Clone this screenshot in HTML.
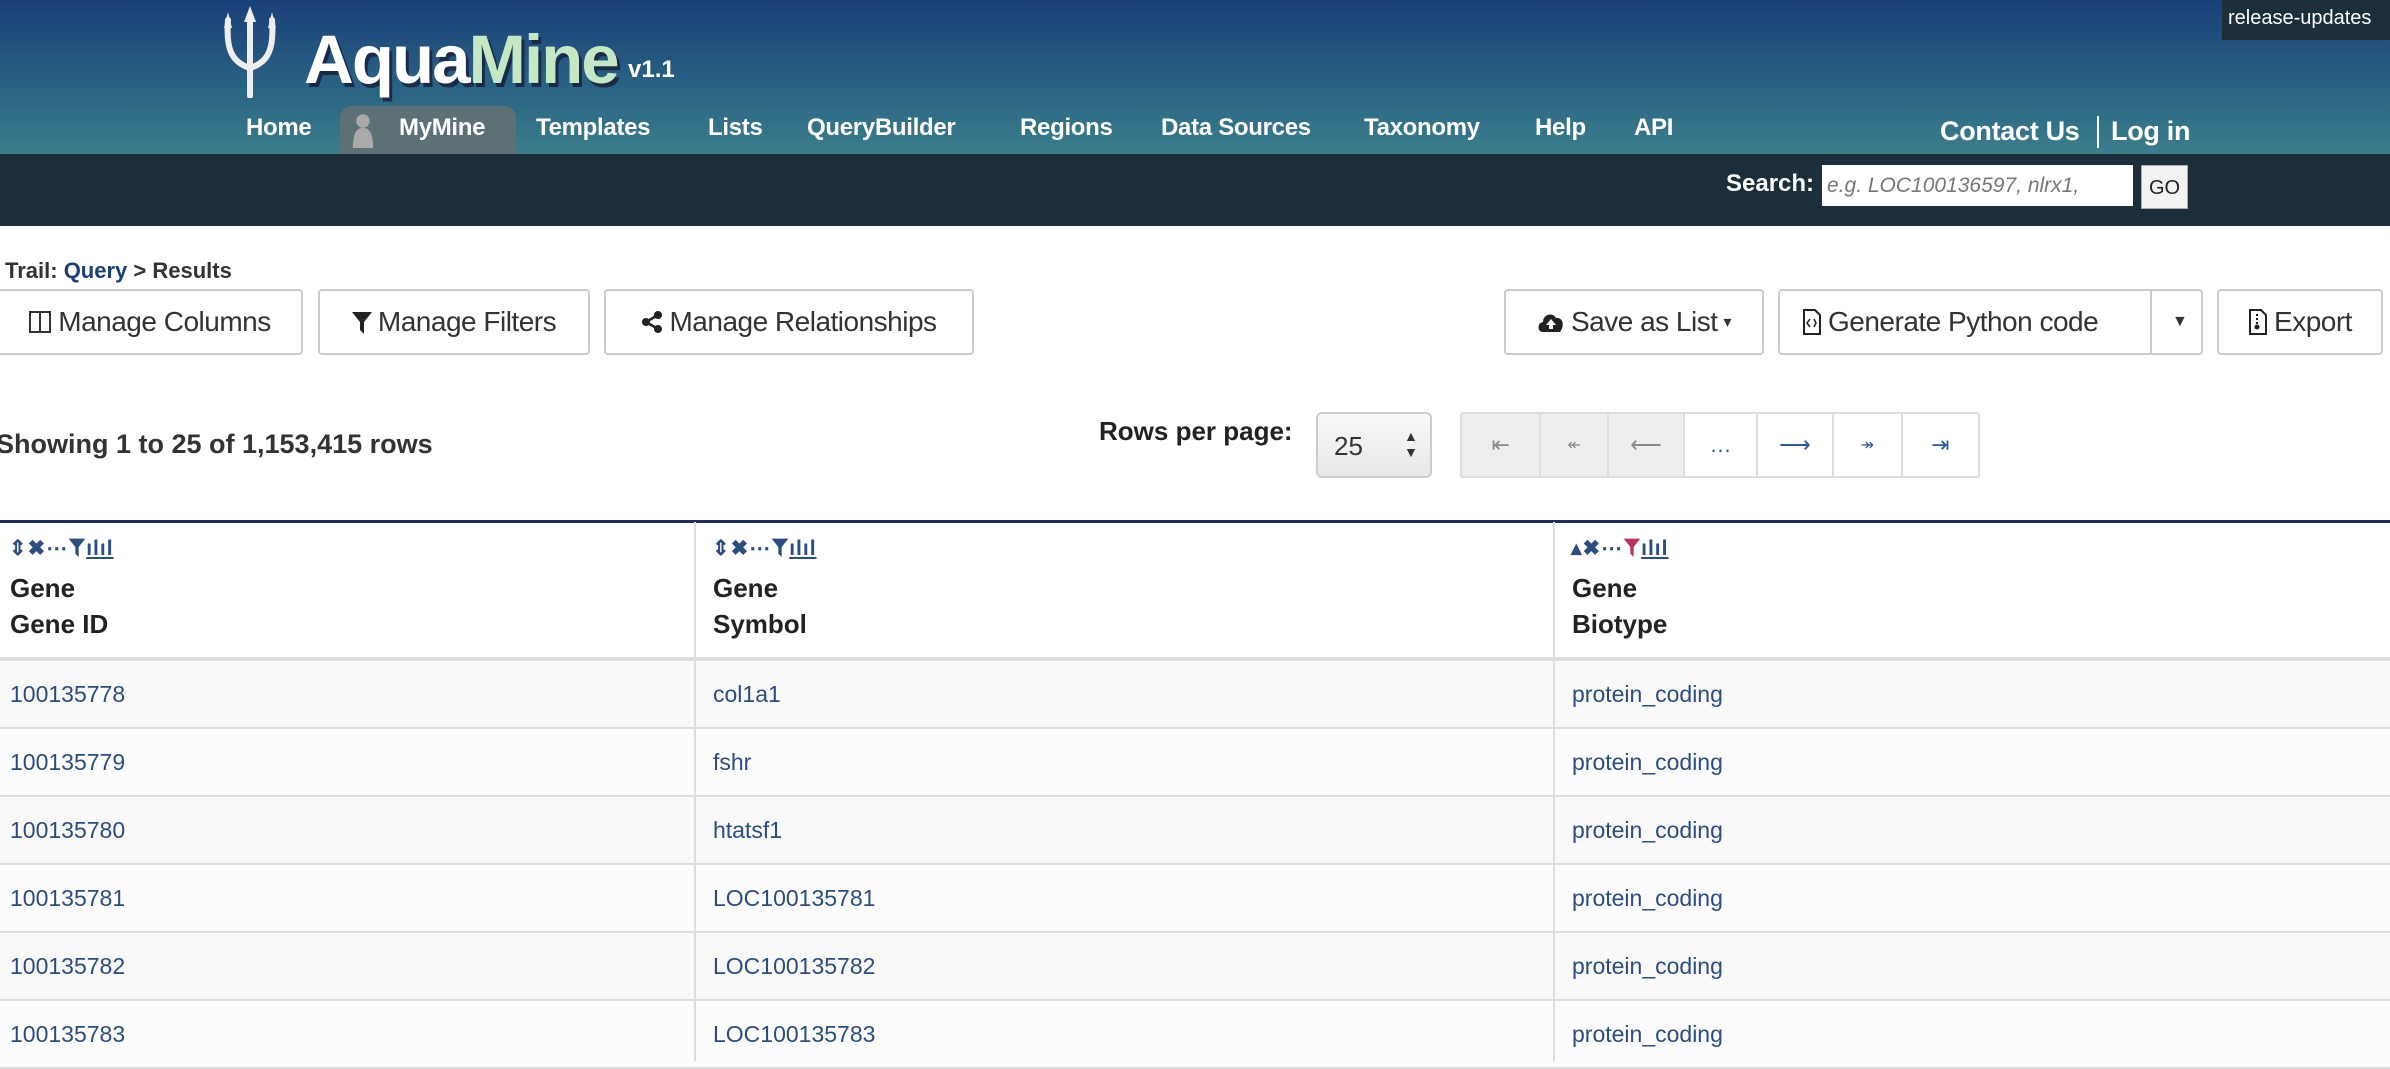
<!DOCTYPE html>
<html><head><meta charset="utf-8"><style>
*{box-sizing:border-box;margin:0;padding:0}
body{width:2390px;height:1060px;overflow:hidden;background:#fff;font-family:"Liberation Sans",sans-serif;color:#333;position:relative}
.hdr{position:absolute;left:0;top:0;width:2390px;height:154px;background:linear-gradient(#1a3f78,#2a6584 60%,#3c7d8b)}
.bar{position:absolute;left:0;top:154px;width:2390px;height:72px;background:#1c2e3a}
.abs{position:absolute;white-space:nowrap}
.nav{color:#fff;font-weight:bold;font-size:24px;top:114px;letter-spacing:-0.3px}
.btn{position:absolute;top:289px;height:66px;border:2px solid #ccc;border-radius:4px;background:#fff;font-size:28px;color:#333;display:flex;align-items:center;justify-content:center;gap:6px;letter-spacing:-0.5px}
.pg{position:absolute;top:412px;height:66px;border:2px solid #ddd;border-radius:3px;display:flex}
.pg div{border-right:2px solid #ddd;display:flex;align-items:center;justify-content:center;font-size:22px;color:#2a5a9a}
.pg div.d{background:#eee;color:#888}
.row{position:absolute;left:0;width:2390px;height:68px;border-bottom:2px solid #ddd;font-size:23px;color:#2b4d80}
.row span{position:absolute;top:20px}
.vl{position:absolute;top:522px;width:2px;height:538px;background:#ddd}
.hi{font-size:21px;color:#2b4d80;top:536px;font-weight:bold;letter-spacing:1px}
.ht{font-weight:bold;font-size:26px;color:#222;line-height:36px;top:570px}
</style></head><body>
<div class="hdr"></div>
<div class="bar"></div>
<svg class="abs" style="left:222px;top:6px" width="56" height="92" viewBox="0 0 56 92"><g fill="none" stroke="#eee" stroke-width="6" stroke-linecap="round"><path d="M28 10V90"/><path d="M6 14C4 40 8 56 28 62C48 56 52 40 50 14"/></g><path d="M28 0L22 16H34Z M6 6L2 22H10Z M50 6L46 22H54Z" fill="#eee"/></svg>
<div class="abs" style="left:304px;top:20px;font-size:69px;font-weight:bold;letter-spacing:-2px;text-shadow:3px 4px 0 #1a2a48"><span style="color:#fff">Aqua</span><span style="color:#c4e8c4">Mine</span></div>
<div class="abs" style="left:628px;top:56px;font-size:24px;font-weight:bold;color:#fff">v1.1</div>
<div class="abs" style="left:340px;top:106px;width:176px;height:48px;background:#5c7076;border-radius:12px 12px 0 0"></div>
<svg class="abs" style="left:352px;top:112px" width="22" height="36" viewBox="0 0 18 32"><circle cx="9" cy="8" r="6" fill="#aaa"/><path d="M0 32C0 18 4 14 9 14S18 18 18 32Z" fill="#aaa"/></svg>
<div class="abs nav" style="left:246px">Home</div>
<div class="abs nav" style="left:399px">MyMine</div>
<div class="abs nav" style="left:536px">Templates</div>
<div class="abs nav" style="left:708px">Lists</div>
<div class="abs nav" style="left:807px">QueryBuilder</div>
<div class="abs nav" style="left:1020px">Regions</div>
<div class="abs nav" style="left:1161px">Data Sources</div>
<div class="abs nav" style="left:1364px">Taxonomy</div>
<div class="abs nav" style="left:1535px">Help</div>
<div class="abs nav" style="left:1634px">API</div>
<div class="abs nav" style="left:1940px;top:116px;font-size:27px">Contact Us</div>
<div class="abs" style="left:2097px;top:116px;width:2px;height:32px;background:#fff"></div>
<div class="abs nav" style="left:2111px;top:116px;font-size:27px">Log in</div>
<div class="abs" style="left:2222px;top:0;width:168px;height:40px;background:#1c2e3a;color:#fff;font-size:20px;padding:7px 0 0 6px">release-updates</div>
<div class="abs" style="left:1726px;top:170px;color:#fff;font-weight:bold;font-size:24px">Search:</div>
<div class="abs" style="left:1822px;top:165px;width:311px;height:41px;background:#fff;color:#777;font-style:italic;font-size:21px;padding:9px 0 0 5px">e.g. LOC100136597, nlrx1,</div>
<div class="abs" style="left:2141px;top:165px;width:47px;height:44px;background:#f2f2f2;border:1px solid #aaa;font-size:20px;color:#222;padding:11px 0 0 7px">GO</div>
<div class="abs" style="left:5px;top:258px;font-size:22px;font-weight:bold;color:#333">Trail: <span style="color:#1a3f78">Query</span> &gt; Results</div>
<div class="btn" style="left:-4px;width:307px"><svg width="24" height="24" viewBox="0 0 24 24"><rect x="2" y="2" width="20" height="20" fill="none" stroke="#333" stroke-width="2"/><path d="M12 2V22" stroke="#333" stroke-width="2"/></svg>Manage Columns</div>
<div class="btn" style="left:318px;width:272px"><svg width="20" height="24" viewBox="0 0 20 24"><path d="M0 2H20L12 12V24L8 20V12Z" fill="#222"/></svg>Manage Filters</div>
<div class="btn" style="left:604px;width:370px"><svg width="22" height="24" viewBox="0 0 22 24"><circle cx="17" cy="5" r="4" fill="#222"/><circle cx="5" cy="12" r="4" fill="#222"/><circle cx="17" cy="19" r="4" fill="#222"/><path d="M17 5L5 12L17 19" stroke="#222" stroke-width="2.5" fill="none"/></svg>Manage Relationships</div>
<div class="btn" style="left:1504px;width:260px"><svg width="28" height="24" viewBox="0 0 28 24"><path d="M6 22C0 22 0 13 6 12C6 4 16 2 19 8C26 7 28 16 23 22Z" fill="#222"/><path d="M14 9L9 15H12V19H16V15H19Z" fill="#fff"/></svg>Save as List <span style="font-size:16px">▾</span></div>
<div class="btn" style="left:1778px;width:425px;justify-content:flex-start;padding-left:22px"><svg width="20" height="28" viewBox="0 0 20 28"><path d="M2 2H13L18 7V26H2Z" fill="none" stroke="#222" stroke-width="2"/><path d="M8 11L5 15L8 19M12 11L14 15L12 19" stroke="#222" stroke-width="1.5" fill="none"/></svg>Generate Python code<div style="position:absolute;left:370px;top:0;width:2px;height:62px;background:#ccc"></div><span style="position:absolute;left:392px;font-size:16px">▼</span></div>
<div class="btn" style="left:2217px;width:166px"><svg width="20" height="28" viewBox="0 0 20 28"><path d="M2 2H13L18 7V26H2Z" fill="none" stroke="#222" stroke-width="2"/><path d="M9 6V16" stroke="#222" stroke-width="2" stroke-dasharray="2 2"/><circle cx="9" cy="19" r="2.5" fill="#222"/></svg>Export</div>
<div class="abs" style="left:-4px;top:429px;font-size:27px;font-weight:bold;color:#333">Showing 1 to 25 of 1,153,415 rows</div>
<div class="abs" style="left:1099px;top:416px;font-size:26px;font-weight:bold;color:#222">Rows per page:</div>
<div class="abs" style="left:1316px;top:412px;width:116px;height:66px;border:2px solid #ccc;border-radius:6px;background:linear-gradient(#f8f8f8,#e8e8e8);font-size:26px;color:#333;padding:17px 0 0 16px">25<span style="position:absolute;left:86px;top:14px;font-size:14px;line-height:16px">▲<br>▼</span></div>
<div class="pg" style="left:1460px;width:520px">
<div class="d" style="width:80px">⇤</div><div class="d" style="width:68px;font-size:16px">↞</div><div class="d" style="width:77px">⟵</div><div style="width:73px">…</div><div style="width:77px">⟶</div><div style="width:69px;font-size:16px">↠</div><div style="width:76px;border:none">⇥</div></div>
<div class="abs" style="left:0;top:520px;width:2390px;height:3px;background:#1b2f5e"></div>
<div class="vl" style="left:694px"></div><div class="vl" style="left:1553px"></div>
<div class="abs" style="left:0;top:657px;width:2390px;height:4px;background:#ddd"></div>
<div class="abs hi" style="left:9px">⇕✖⋯<svg width="18" height="20" viewBox="0 0 20 24" style="vertical-align:-2px"><path d="M0 2H20L12 12V24L8 20V12Z" fill="#2b4d80"/></svg><u>ılıl</u></div>
<div class="abs hi" style="left:712px">⇕✖⋯<svg width="18" height="20" viewBox="0 0 20 24" style="vertical-align:-2px"><path d="M0 2H20L12 12V24L8 20V12Z" fill="#2b4d80"/></svg><u>ılıl</u></div>
<div class="abs hi" style="left:1571px">▴✖⋯<svg width="18" height="20" viewBox="0 0 20 24" style="vertical-align:-2px"><path d="M0 2H20L12 12V24L8 20V12Z" fill="#b8325a"/></svg><u>ılıl</u></div>
<div class="abs ht" style="left:10px">Gene<br>Gene ID</div>
<div class="abs ht" style="left:713px">Gene<br>Symbol</div>
<div class="abs ht" style="left:1572px">Gene<br>Biotype</div>
<div class="row" style="top:661px;background:#f9f9f9"><span style="left:10px">100135778</span><span style="left:713px">col1a1</span><span style="left:1572px">protein_coding</span></div>
<div class="row" style="top:729px;background:#fcfcfd"><span style="left:10px">100135779</span><span style="left:713px">fshr</span><span style="left:1572px">protein_coding</span></div>
<div class="row" style="top:797px;background:#f9f9f9"><span style="left:10px">100135780</span><span style="left:713px">htatsf1</span><span style="left:1572px">protein_coding</span></div>
<div class="row" style="top:865px;background:#fcfcfd"><span style="left:10px">100135781</span><span style="left:713px">LOC100135781</span><span style="left:1572px">protein_coding</span></div>
<div class="row" style="top:933px;background:#f9f9f9"><span style="left:10px">100135782</span><span style="left:713px">LOC100135782</span><span style="left:1572px">protein_coding</span></div>
<div class="row" style="top:1001px;background:#fcfcfd"><span style="left:10px">100135783</span><span style="left:713px">LOC100135783</span><span style="left:1572px">protein_coding</span></div>
<div class="vl" style="left:694px;top:661px;height:400px"></div><div class="vl" style="left:1553px;top:661px;height:400px"></div>
</body></html>
